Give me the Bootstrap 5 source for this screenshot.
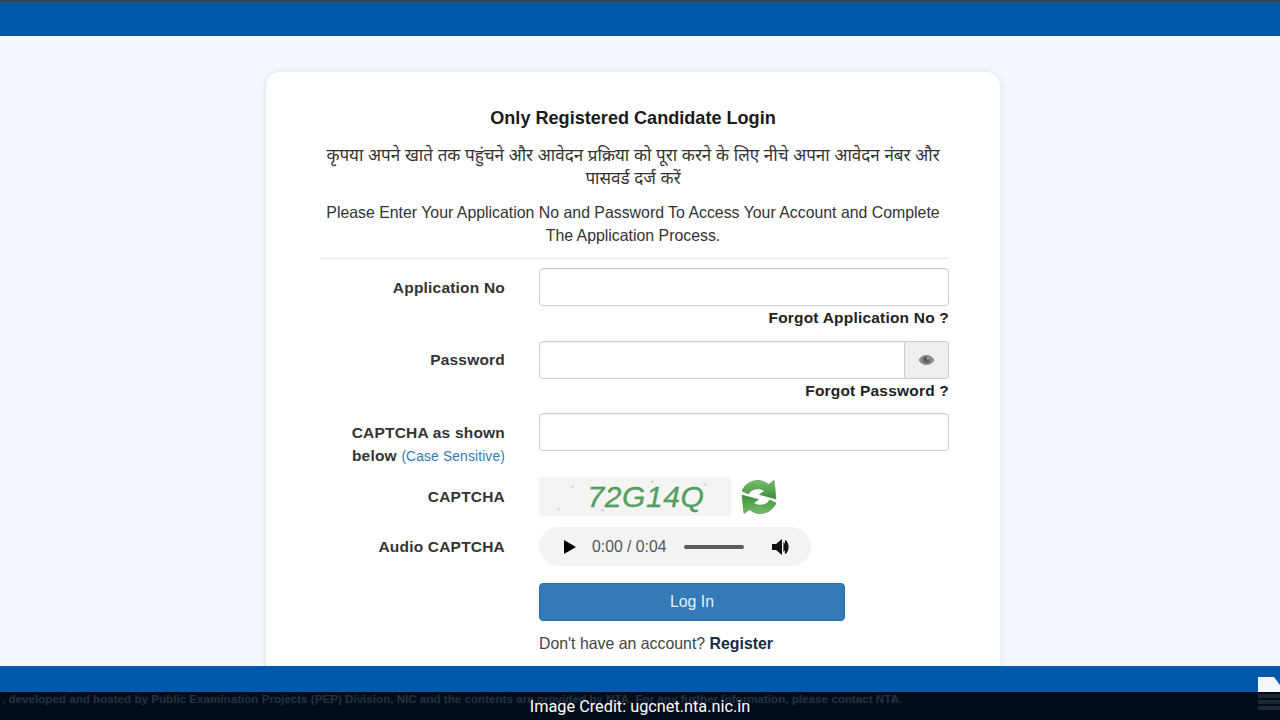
<!DOCTYPE html>
<html lang="en">
<head>
<meta charset="utf-8">
<title>Candidate Login</title>
<link href="https://cdn.jsdelivr.net/npm/bootstrap@5.3.0/dist/css/bootstrap.min.css" rel="stylesheet">
<style>
html,body{height:720px;overflow:hidden}
body{background:#f4f7fd;font-family:"Liberation Sans",Arial,"Noto Sans",sans-serif;color:#333;position:relative}
.pagecolumn{height:720px}
.topstrip{height:36px;background:#0058aa;border-top:2px solid #3a4450;flex:none}
.mainarea{flex:1 1 auto;min-height:0;overflow:hidden;padding:36px 0 0 266px}
.logincard{width:734px;height:640px;background:#fff;border-radius:14px;box-shadow:0 0 6px rgba(40,60,90,.13);padding:34px 51px 0 54px}
.logintitle{font-size:18.1px;font-weight:700;color:#1a1a1a;line-height:24px;margin:0 0 14px;padding-right:3px;text-align:center}
.hinditext{font-size:17px;line-height:23px;color:#333;margin:0 0 11px;padding-right:3px;text-align:center}
.entertext{font-size:15.87px;line-height:23px;color:#333;margin:0 0 11px;padding-right:3px;text-align:center}
.ruleline{border-top:1px solid #eaeaea;margin:0 0 9px}
.formgrid{display:grid;grid-template-columns:185px 410px;column-gap:34px;justify-content:start}
.fieldlabel{font-size:15.5px;font-weight:700;color:#333;text-align:right;letter-spacing:.2px;line-height:23px;margin:0;padding-top:7.5px}
.fieldbox{height:38px;border:1px solid #ccc;border-radius:4px;background:#fff;box-shadow:inset 0 1px 1px rgba(0,0,0,.07)}
.eyeaddon{width:44px;background:#eee;border:1px solid #ccc;border-left:0;border-radius:0 4px 4px 0}
.pwfield{border-radius:4px 0 0 4px}
.forgotlink{font-size:15.5px;font-weight:700;color:#222;text-align:right;letter-spacing:.2px;line-height:23px;height:23px;margin-bottom:11.5px;text-decoration:none;display:block}
.casenote{font-size:13.8px;font-weight:400;color:#337ab7;letter-spacing:.15px}
.capimage{width:192px;height:39px;background:#f4f5f3;position:relative;font-style:italic;font-size:30px;letter-spacing:.6px;color:#55a062;-webkit-text-stroke:.3px #4a8f58;padding-left:22px;text-align:center;line-height:39px}
.capdot{position:absolute;width:3px;height:3px;border-radius:50%;background:#d8dad6}
.audiobar{width:272px;height:39px;background:#f1f3f4;border-radius:20px;font-size:15.75px;color:#555;padding-left:25px;margin-bottom:17px}
.timelabel{margin-left:16px}
.seekline{width:60px;height:4px;border-radius:2px;background:#5c5c5c;margin-left:18px}
.volicon{margin-left:27px}
.loginbtn{width:306px;height:38px;background:#337ab7;border:1px solid #2e6da4;border-radius:4px;color:#e6eff8;font-size:15.87px;padding:0}
.regline{font-size:15.87px;line-height:23px;color:#444;margin-top:11px}
.regline a{color:#1a2b44;font-weight:700;text-decoration:none}
.bluefoot{height:26px;background:#0058aa;flex:none}
.darkfoot{height:28px;background:#020d1b;flex:none;color:#27323f;font-size:11.64px;font-weight:700;line-height:14px;white-space:nowrap;padding-left:2px;overflow:hidden}
.creditcap{position:absolute;left:0;right:0;bottom:2px;text-align:center;color:#fff;font-family:Roboto,sans-serif;font-size:16.3px;line-height:22px}
.cornerdoc{position:absolute;right:0;top:677px;width:22px;height:37px}
.capgap{margin-bottom:26px}
.caprow{margin-bottom:11px}
.refreshicon{margin-left:10px}
</style>
</head>
<body>
<div class="pagecolumn d-flex flex-column">
  <div class="topstrip"></div>
  <div class="mainarea">
    <div class="logincard">
      <h1 class="logintitle">Only Registered Candidate Login</h1>
      <p class="hinditext">कृपया अपने खाते तक पहुंचने और आवेदन प्रक्रिया को पूरा करने के लिए नीचे अपना आवेदन नंबर और पासवर्ड दर्ज करें</p>
      <p class="entertext">Please Enter Your Application No and Password To Access Your Account and Complete The Application Process.</p>
      <div class="ruleline"></div>
      <form class="formgrid">
        <label class="fieldlabel">Application No</label>
        <div>
          <div class="fieldbox"></div>
          <a class="forgotlink" href="#">Forgot Application No ?</a>
        </div>
        <label class="fieldlabel">Password</label>
        <div>
          <div class="d-flex">
            <div class="fieldbox pwfield flex-grow-1"></div>
            <div class="eyeaddon d-flex align-items-center justify-content-center">
              <svg width="17" height="12" viewBox="0 0 17 12"><path d="M.5 6C2.500 2.600 5.300 1 8.500 1s6 1.600 8 5c-2 3.400-4.800 5-8 5s-6-1.600-8-5z" fill="#8a8a8a"/><circle cx="8.500" cy="5.800" r="3.300" fill="#5c5c5c"/><circle cx="10" cy="4.300" r="1.100" fill="#ccc"/></svg>
            </div>
          </div>
          <a class="forgotlink" href="#">Forgot Password ?</a>
        </div>
        <label class="fieldlabel">CAPTCHA as shown below <span class="casenote">(Case Sensitive)</span></label>
        <div class="fieldbox capgap"></div>
        <label class="fieldlabel">CAPTCHA</label>
        <div class="caprow d-flex align-items-center">
          <div class="capimage">72G14Q
            <span class="capdot" style="left:32px;top:8px"></span>
            <span class="capdot" style="left:165px;top:6px"></span>
            <span class="capdot" style="left:112px;top:3px"></span>
            <span class="capdot" style="left:18px;top:31px"></span>
            <span class="capdot" style="left:62px;top:32px"></span>
          </div>
          <svg class="refreshicon" width="36" height="36" viewBox="0 0 36 36">
            <defs><linearGradient id="grn" x1="0" y1="0" x2="0" y2="1"><stop offset="0" stop-color="#76bd6b"/><stop offset="1" stop-color="#3c8f3a"/></linearGradient></defs>
            <path d="M1 12C4 5 11 1 18 1.500c4 .3 7 2 9.500 4L33 1.500 35 20 18.500 15.500l5-3.500c-4-3-10-3-14.500 .5L7.500 15z" fill="url(#grn)" stroke="#3d8a39" stroke-width=".6"/>
            <path d="M1 12C4 5 11 1 18 1.500c4 .3 7 2 9.500 4L33 1.500 35 20 18.500 15.500l5-3.500c-4-3-10-3-14.500 .5L7.500 15z" transform="rotate(180 18 18)" fill="url(#grn)" stroke="#3d8a39" stroke-width=".6"/>
          </svg>
        </div>
        <label class="fieldlabel">Audio CAPTCHA</label>
        <div class="audiobar d-flex align-items-center">
          <svg width="12" height="14" viewBox="0 0 12 14"><path d="M0 0l12 7-12 7z" fill="#000"/></svg>
          <span class="timelabel">0:00 / 0:04</span>
          <div class="seekline"></div>
          <svg class="volicon" width="20" height="18" viewBox="0 0 20 18"><path d="M1 6h4l6-5v16l-6-5H1z" fill="#111"/><path d="M13 5.500c2 2 2 5 0 7z M14 2.500c4 3 4 10 0 13" fill="#111" stroke="#111" stroke-width="1.200"/></svg>
        </div>
        <div></div>
        <div>
          <button type="button" class="loginbtn d-block">Log In</button>
          <div class="regline">Don't have an account? <a href="#">Register</a></div>
        </div>
      </form>
    </div>
  </div>
  <div class="bluefoot"></div>
  <div class="darkfoot">, developed and hosted by Public Examination Projects (PEP) Division, NIC and the contents are provided by NTA. For any further information, please contact NTA.</div>
</div>
<div class="creditcap">Image Credit: ugcnet.nta.nic.in</div>
<svg class="cornerdoc" viewBox="0 0 22 37"><path d="M0 0h16l6 8v7H0z" fill="#f3f6fb"/><path d="M0 17h22v4H0zM0 23h22v4H0zM0 29h22v4H0z" fill="#1f2731"/></svg>
</body>
</html>
